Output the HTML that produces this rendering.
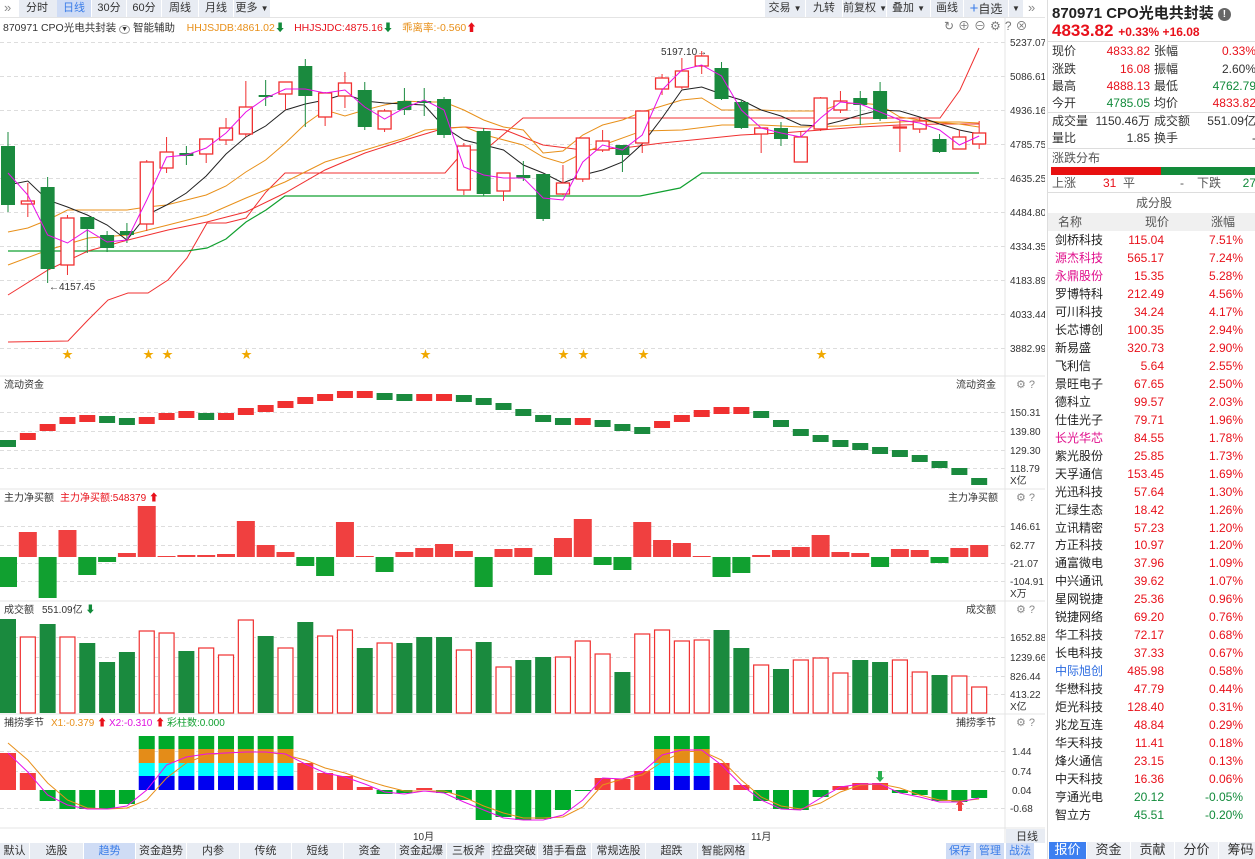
<!DOCTYPE html>
<html><head><meta charset="utf-8"><style>
*{margin:0;padding:0;box-sizing:border-box}
body{width:1255px;height:859px;overflow:hidden;background:#fff;font-family:"Liberation Sans","Noto Sans CJK SC",sans-serif;font-size:12px;color:#333;position:relative}
.abs{position:absolute;white-space:nowrap}
.tb{position:absolute;top:0;height:17px;background:#e8ecf3;font-size:11px;line-height:17px;text-align:center;color:#333;white-space:nowrap}
.bt{position:absolute;top:843px;height:16px;background:#e8ecf3;font-size:11px;line-height:16px;text-align:center;color:#333;white-space:nowrap;overflow:hidden}
#rp{position:absolute;left:1047px;top:0;width:208px;height:859px;border-left:1px solid #ddd}
.r{position:absolute;left:0;width:208px;height:18px;font-size:12px;line-height:18px;white-space:nowrap}
.r span{position:absolute}
.red{color:#e8101a}.grn{color:#118a3a}
</style></head><body>
<div class="abs" style="left:4px;top:0;font-size:13px;color:#888">»</div>
<div class="tb" style="left:19px;width:36px">分时</div><div class="tb" style="left:55px;width:16px;font-size:8px">▼</div>
<div class="tb" style="left:57px;width:34px;background:#cfdcf5;color:#3b7de8">日线</div>
<div class="tb" style="left:92px;width:34px">30分</div>
<div class="tb" style="left:127px;width:34px">60分</div>
<div class="tb" style="left:162px;width:36px">周线</div>
<div class="tb" style="left:199px;width:34px">月线</div>
<div class="tb" style="left:234px;width:36px">更多 <span style="font-size:8px">▼</span></div>
<div class="tb" style="left:765px;width:40px">交易 <span style="font-size:8px">▼</span></div>
<div class="tb" style="left:806px;width:36px">九转</div>
<div class="tb" style="left:843px;width:43px">前复权 <span style="font-size:8px">▼</span></div>
<div class="tb" style="left:887px;width:43px">叠加 <span style="font-size:8px">▼</span></div>
<div class="tb" style="left:931px;width:32px">画线</div>
<div class="tb" style="left:964px;width:44px;font-size:12px"><span style="color:#3b7de8;font-size:15px">+</span>自选</div>
<div class="tb" style="left:1009px;width:14px;font-size:8px">▼</div>
<div class="abs" style="left:1028px;top:0;font-size:13px;color:#888">»</div>
<div class="abs" style="left:0;top:17px;width:1045px;height:1px;background:#e4e4e4"></div>
<div class="abs" style="left:3px;top:20px;font-size:10.5px">870971 CPO光电共封装 <span style="border:1px solid #999;border-radius:50%;font-size:7px;padding:0 1px">▼</span> 智能辅助 &nbsp; &nbsp;<span style="color:#e8901a">HHJSJDB:4861.02</span><span class="grn">⬇</span> &nbsp; <span class="red">HHJSJDC:4875.16</span><span class="grn">⬇</span> &nbsp; <span style="color:#e8901a">乖离率:-0.560</span><span class="red">⬆</span></div>
<div class="abs" style="left:944px;top:17px;font-size:12px;color:#777;letter-spacing:4px">↻⊕⊖⚙?⊗</div>

<svg id="ch" width="1045" height="843" style="position:absolute;left:0;top:0" font-family="Liberation Sans,Noto Sans CJK SC,sans-serif" font-size="10">
<g fill="#333">
<text x="1010" y="46">5237.07</text><text x="1010" y="80">5086.61</text><text x="1010" y="114">4936.16</text><text x="1010" y="148">4785.75</text><text x="1010" y="182">4635.25</text><text x="1010" y="216">4484.80</text><text x="1010" y="250">4334.35</text><text x="1010" y="284">4183.89</text><text x="1010" y="318">4033.44</text><text x="1010" y="352">3882.99</text>
<text x="1010" y="416">150.31</text><text x="1010" y="435">139.80</text><text x="1010" y="454">129.30</text><text x="1010" y="472">118.79</text><text x="1010" y="484">X亿</text>
<text x="1010" y="530">146.61</text><text x="1010" y="549">62.77</text><text x="1010" y="567">-21.07</text><text x="1010" y="585">-104.91</text><text x="1010" y="597">X万</text>
<text x="1010" y="641">1652.88</text><text x="1010" y="661">1239.66</text><text x="1010" y="680">826.44</text><text x="1010" y="698">413.22</text><text x="1010" y="710">X亿</text>
<text x="1012" y="755">1.44</text><text x="1012" y="775">0.74</text><text x="1012" y="794">0.04</text><text x="1010" y="812">-0.68</text>
<text x="4" y="388">流动资金</text><text x="956" y="388">流动资金</text>
<text x="4" y="501">主力净买额</text><text x="60" y="501" fill="#e8101a">主力净买额:548379 ⬆</text><text x="948" y="501">主力净买额</text>
<text x="4" y="613">成交额</text><text x="42" y="613">551.09亿 <tspan fill="#118a3a">⬇</tspan></text><text x="966" y="613">成交额</text>
<text x="4" y="726">捕捞季节</text><text x="51" y="726" fill="#e8901a">X1:-0.379 <tspan fill="#e8101a">⬆</tspan></text><text x="109" y="726" fill="#e010e0">X2:-0.310 <tspan fill="#e8101a">⬆</tspan></text><text x="167" y="726" fill="#11a030">彩柱数:0.000</text><text x="956" y="726">捕捞季节</text>
<text x="413" y="840">10月</text><text x="751" y="840">11月</text>
<text x="49" y="290">←4157.45</text><text x="661" y="55">5197.10→</text>
</g>
<g fill="#888" font-size="11"><text x="1016" y="388">⚙ ?</text><text x="1016" y="501">⚙ ?</text><text x="1016" y="613">⚙ ?</text><text x="1016" y="726">⚙ ?</text></g>
<g id="grid" stroke="#ddd" stroke-dasharray="4,3"></g>
<g stroke="#e4e4e4"><line x1="0" y1="376" x2="1045" y2="376"/><line x1="0" y1="489" x2="1045" y2="489"/><line x1="0" y1="601" x2="1045" y2="601"/><line x1="0" y1="714" x2="1045" y2="714"/><line x1="0" y1="828" x2="1045" y2="828"/><line x1="1005" y1="18" x2="1005" y2="843"/></g>
<rect x="1006" y="829" width="39" height="14" fill="#e8ecf3"/><text x="1016" y="840" font-size="11" fill="#333">日线</text>
<g id="g"></g>
</svg>

<div id="bb"></div>

<div id="rp">
<div class="abs" style="left:4px;top:2px;font-size:15px;font-weight:bold;color:#222">870971 CPO光电共封装 <span style="display:inline-block;width:13px;height:13px;border-radius:50%;background:#666;color:#fff;font-size:10px;line-height:13px;text-align:center;vertical-align:1px">!</span></div>
<div class="abs red" style="left:4px;top:21px;font-size:17px;font-weight:bold">4833.82 <span style="font-size:12px">+0.33% +16.08</span></div>
<div style="position:absolute;left:0;top:41px;width:208px;height:1px;background:#ddd"></div>
<div id="kv"></div>
</div>
<script>
var S='http://www.w3.org/2000/svg',G=document.getElementById('g');
function el(t,a){var e=document.createElementNS(S,t);for(var k in a)e.setAttribute(k,a[k]);G.appendChild(e);return e}
var gr=document.getElementById('grid');
[42,76,110,144,178,212,246,280,314,348,412,431,450,468,526,545,563,581,637,657,676,694,751,771,808].forEach(function(y){var l=document.createElementNS(S,'line');l.setAttribute('x1',0);l.setAttribute('x2',1005);l.setAttribute('y1',y+.5);l.setAttribute('y2',y+.5);gr.appendChild(l)});
var RC='#f03030',GC='#1a8a3e';
function X(i){return 8+19.82*i}
var C=[[146,205,132,212,0],[201,204,183,217,1],[187,269,177,283,0],[218,265,215,275,1],[217,229,217,253,0],[235,248,231,252,0],[231,235,223,243,0],[162,224,160,231,1],[152,168,137,173,1],[153,156,146,165,0],[139,154,139,163,1],[128,140,118,145,1],[107,134,81,137,1],[95,97,80,106,0],[82,94,82,110,1],[66,96,59,127,0],[93,117,92,126,1],[83,96,72,108,1],[90,127,82,130,0],[111,129,109,132,1],[101,110,88,115,0],[101,103,88,116,0],[99,135,97,138,0],[146,190,143,195,1],[131,194,128,196,0],[173,191,173,201,1],[175,178,161,181,0],[174,219,174,221,0],[183,194,165,195,1],[138,179,138,182,1],[141,150,130,152,1],[145,155,145,172,0],[111,143,111,153,1],[78,89,74,95,1],[71,87,58,89,1],[56,66,51,74,1],[68,99,62,100,0],[102,128,100,129,0],[128,134,128,153,1],[128,139,122,146,0],[137,162,132,162,1],[98,129,97,131,1],[101,110,91,113,1],[98,105,91,125,0],[91,119,82,121,0],[127,128,120,152,1],[121,129,118,133,1],[139,152,134,153,0],[137,149,130,149,1],[133,144,121,149,1]];
function pl(p,c,w){el('polyline',{points:p.map(function(a){return a.join(',')}).join(' '),fill:'none',stroke:c,'stroke-width':w||1})}
function line(ys,c){pl(ys.map(function(y,i){return[X(i),y]}),c)}
pl([[8,342],[68,341],[88,320],[108,300],[128,293],[148,293],[168,280],[187,258],[207,223],[226,223],[246,218],[266,192],[285,173],[445,173],[465,150],[485,150],[523,118],[940,118],[960,90],[979,48]],'#f03030');
pl([[8,251],[187,251],[207,248],[226,239],[246,222],[266,210],[285,196],[640,196],[680,188],[702,173],[979,173]],'#11a030',1.2);
pl([[8,295],[48,270],[88,251],[128,240],[168,230],[207,222],[246,212],[285,193],[325,170],[365,153],[405,140],[445,128],[465,127],[505,130],[543,145],[583,150],[623,148],[662,143],[702,139],[741,135],[781,133],[821,130],[860,127],[900,125],[940,124],[979,124]],'#f03030');
pl([[8,265],[48,250],[88,238],[128,235],[168,225],[207,215],[246,198],[285,182],[325,162],[365,150],[405,138],[425,130],[465,127],[485,135],[523,145],[543,157],[563,163],[583,153],[603,145],[642,131],[682,130],[722,125],[761,125],[801,127],[840,126],[880,123],[919,121],[959,124],[979,127]],'#e8901a');
line([232,228,220,210,210,210,210,207,205,200,195,186,172,160,143,124,110,116,110,105,101,102,102,110,120,127,130,153,151,135,125,120,112,106,100,98,110,110,110,111,111,111,104,103,105,117,120,122,122,123],'#e8901a');
line([185,181,200,207,215,225,240,215,205,193,176,154,137,126,110,104,100,94,101,103,104,105,127,140,145,150,165,173,183,175,170,162,144,118,90,87,94,100,110,116,125,126,121,115,110,111,117,124,130,134],'#222');
C.forEach(function(c,i){var x=X(i),col=c[4]?RC:GC;
el('line',{x1:x,x2:x,y1:c[2],y2:c[3],stroke:col});
if(c[4])el('rect',{x:x-6.5,y:c[0],width:13,height:Math.max(c[1]-c[0],1),fill:'#fff',stroke:col,'stroke-width':1.3});
else el('rect',{x:x-7,y:c[0],width:14,height:Math.max(c[1]-c[0],2),fill:col});});
line([173,195,235,243,230,242,240,200,157,155,148,133,112,98,89,89,93,90,107,119,108,100,110,167,175,178,178,198,200,162,145,150,135,90,70,65,76,110,128,133,137,118,102,104,112,120,123,130,145,136],'#e810e8');
[67,148,167,246,425,563,583,643,821].forEach(function(x){el('text',{x:x-5,y:358,fill:'#f0a800','font-size':11}).textContent='★'});
var F=[443,436,427,420,418,419,421,420,416,414,416,416,411,408,404,400,397,394,394,396,397,397,397,398,401,406,412,418,421,421,423,427,430,424,418,413,410,410,414,423,432,438,443,446,450,453,458,464,471,481];
F.forEach(function(y,i){el('rect',{x:X(i)-8,y:y-3,width:16,height:7,fill:(i>0&&y<=F[i-1])?RC:GC})});
var N=[587,532,598,530,575,562,553,506,556,555,555,554,521,545,552,566,576,522,556,572,552,548,544,551,587,549,548,575,538,519,565,570,522,540,543,556,577,573,555,550,547,535,552,553,567,549,550,563,548,545];
N.forEach(function(y,i){var x=X(i)-9;if(y<557)el('rect',{x:x,y:y,width:18,height:557-y,fill:'#f04040'});else el('rect',{x:x,y:557,width:18,height:y-557,fill:'#11a030'})});
var V=[619,637,624,637,643,662,652,631,633,651,648,655,620,636,648,622,636,630,648,643,643,637,637,650,642,667,660,657,657,641,654,672,634,630,641,640,630,648,665,669,660,658,673,660,662,660,672,675,676,687];
V.forEach(function(y,i){var x=X(i);if(C[i][4])el('rect',{x:x-7.5,y:y,width:15,height:713-y,fill:'#fff',stroke:RC,'stroke-width':1.2});else el('rect',{x:x-8,y:y,width:16,height:713-y,fill:GC})});
var B=[753,773,801,809,809,809,804,'s','s','s','s','s','s','s','s',763,773,776,787,794,793,788,793,800,820,817,820,819,810,791,778,779,771,'s','s','s',763,785,801,809,810,797,786,783,783,793,795,801,802,798];
B.forEach(function(y,i){var x=X(i)-8;if(y=='s'){el('rect',{x:x,y:736,width:16,height:13,fill:'#00aa2a'});el('rect',{x:x,y:749,width:16,height:14,fill:'#e48c18'});el('rect',{x:x,y:763,width:16,height:13,fill:'#00ffff'});el('rect',{x:x,y:776,width:16,height:14,fill:'#0000f0'})}else if(y<790)el('rect',{x:x,y:y,width:16,height:790-y,fill:'#f43c3c'});else el('rect',{x:x,y:790,width:16,height:y-790,fill:'#00aa2a'})});
line([743,760,783,800,808,809,808,800,778,763,755,753,752,752,755,760,768,773,780,786,791,791,791,797,806,813,818,818,817,807,785,779,775,762,752,751,760,780,797,806,809,803,792,785,784,788,795,800,801,799],'#e8901a');
line([753,772,795,805,809,809,806,790,765,757,754,753,752,752,754,764,773,777,784,792,794,791,793,802,810,818,820,820,815,800,778,779,772,755,750,750,765,785,800,809,810,798,787,784,784,793,797,802,802,798],'#e810e8');
el('text',{x:874,y:781,fill:'#2bb050','font-size':12}).textContent='⬇';
el('text',{x:954,y:810,fill:'#f04040','font-size':12}).textContent='⬆';
var bb=document.getElementById('bb'),L=['默认','选股','趋势','资金趋势','内参','传统','短线','资金','资金起爆','三板斧','控盘突破','猎手看盘','常规选股','超跌','智能网格'],xs=[0,30,84,136,187,240,292,344,396,447,491,538,592,646,698,750];
L.forEach(function(t,i){var d=document.createElement('div');d.className='bt';d.style.left=xs[i]+'px';d.style.width=(xs[i+1]-xs[i]-1)+'px';d.textContent=t;if(i==2){d.style.background='#cfdcf5';d.style.color='#3b7de8'}bb.appendChild(d)});
[['保存',946],['管理',976],['战法',1006]].forEach(function(a){var d=document.createElement('div');d.className='bt';d.style.left=a[1]+'px';d.style.width='28px';d.style.background='#cfdcf5';d.style.color='#3b7de8';d.textContent=a[0];bb.appendChild(d)});
[['报价',1049,1],['资金',1087],['贡献',1131],['分价',1175],['筹码',1219]].forEach(function(a){var d=document.createElement('div');d.className='bt';d.style.cssText+='left:'+a[1]+'px;width:'+(a[1]==1049?37:43)+'px;height:17px;top:842px;font-size:13px;background:'+(a[2]?'#3d7ff0;color:#fff':'#eef0f5');d.textContent=a[0];bb.appendChild(d)});
var kv=document.getElementById('kv'),h='';
function row(y,a,b,c,d,bc,dc){h+='<div class="r" style="top:'+y+'px"><span style="left:4px">'+a+'</span><span style="right:106px" class="'+bc+'">'+b+'</span><span style="left:106px">'+c+'</span><span style="right:0px" class="'+dc+'">'+d+'</span></div>'}
row(42,'现价','4833.82','张幅','0.33%','red','red');
row(60,'涨跌','16.08','振幅','2.60%','red','');
row(77,'最高','4888.13','最低','4762.79','red','grn');
row(94,'今开','4785.05','均价','4833.82','grn','red');
h+='<div style="position:absolute;left:0;top:112px;width:208px;height:1px;background:#ddd"></div>';
row(112,'成交量','1150.46万','成交额','551.09亿','','');
row(129,'量比','1.85','换手','-','','');
h+='<div style="position:absolute;left:0;top:148px;width:208px;height:1px;background:#ddd"></div>';
h+='<div class="r" style="top:149px;color:#555"><span style="left:4px">涨跌分布</span></div>';
h+='<div style="position:absolute;left:3px;top:167px;width:110px;height:8px;background:#e81010"></div><div style="position:absolute;left:113px;top:167px;width:95px;height:8px;background:#138a3a"></div>';
h+='<div class="r" style="top:174px;color:#555"><span style="left:4px">上涨</span><span style="left:55px" class="red">31</span><span style="left:75px">平</span><span style="left:132px">-</span><span style="left:149px">下跌</span><span style="right:0" class="grn">27</span></div>';
h+='<div style="position:absolute;left:0;top:192px;width:208px;height:1px;background:#ddd"></div>';
h+='<div class="r" style="top:194px;color:#555"><span style="left:88px">成分股</span></div>';
h+='<div class="r" style="top:213px;background:#f0f0f0;color:#555"><span style="left:10px">名称</span><span style="left:97px">现价</span><span style="left:163px">涨幅</span></div>';
var D=[['剑桥科技','115.04','7.51%'],['源杰科技','565.17','7.24%','#e0108c'],['永鼎股份','15.35','5.28%','#e0108c'],['罗博特科','212.49','4.56%'],['可川科技','34.24','4.17%'],['长芯博创','100.35','2.94%'],['新易盛','320.73','2.90%'],['飞利信','5.64','2.55%'],['景旺电子','67.65','2.50%'],['德科立','99.57','2.03%'],['仕佳光子','79.71','1.96%'],['长光华芯','84.55','1.78%','#e0108c'],['紫光股份','25.85','1.73%'],['天孚通信','153.45','1.69%'],['光迅科技','57.64','1.30%'],['汇绿生态','18.42','1.26%'],['立讯精密','57.23','1.20%'],['方正科技','10.97','1.20%'],['通富微电','37.96','1.09%'],['中兴通讯','39.62','1.07%'],['星网锐捷','25.36','0.96%'],['锐捷网络','69.20','0.76%'],['华工科技','72.17','0.68%'],['长电科技','37.33','0.67%'],['中际旭创','485.98','0.58%','#2a6ae0'],['华懋科技','47.79','0.44%'],['炬光科技','128.40','0.31%'],['兆龙互连','48.84','0.29%'],['华天科技','11.41','0.18%'],['烽火通信','23.15','0.13%'],['中天科技','16.36','0.06%'],['亨通光电','20.12','-0.05%'],['智立方','45.51','-0.20%']];
D.forEach(function(d,i){var y=231+17.97*i,c=d[2][0]=='-'?'grn':'red';h+='<div class="r" style="top:'+y+'px"><span style="left:7px;color:'+(d[3]||'#222')+'">'+d[0]+'</span><span style="left:56px;width:60px;text-align:right" class="'+c+'">'+d[1]+'</span><span style="right:13px" class="'+c+'">'+d[2]+'</span></div>'});
kv.innerHTML=h;
</script>
</body></html>
